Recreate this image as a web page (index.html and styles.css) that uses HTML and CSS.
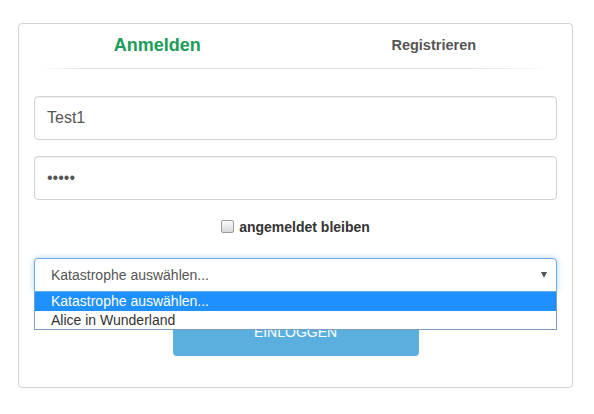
FILE: index.html
```html
<!DOCTYPE html>
<html lang="de">
<head>
<meta charset="utf-8">
<title>Anmelden</title>
<link rel="stylesheet" href="styles.css">
</head>
<body>
<div class="wrap">
  <div class="card">
    <div class="tabs">
      <div class="tab active">Anmelden</div>
      <div class="tab">Registrieren</div>
    </div>
    <div class="divider"></div>
    <form class="form">
      <input class="field" type="text" value="Test1">
      <input class="field" type="password" value="12345">
      <label class="remember"><input type="checkbox" class="check"><span>angemeldet bleiben</span></label>
      <div class="select-wrap">
        <div class="select">
          <span>Katastrophe auswählen...</span>
          <span class="arrow"></span>
        </div>
        <div class="dropdown">
          <div class="option selected">Katastrophe auswählen...</div>
          <div class="option">Alice in Wunderland</div>
        </div>
      </div>
      <button type="button" class="btn">EINLOGGEN</button>
    </form>
  </div>
</div>
</body>
</html>
```
FILE: styles.css
```css
html, body {
  margin: 0;
  padding: 0;
  background: #fff;
}
body {
  font-family: "Liberation Sans", Arial, sans-serif;
  color: #333;
}
.wrap {
  padding: 23px 22px 0 18px;
}
.card {
  box-sizing: border-box;
  width: 555px;
  height: 365px;
  border: 1px solid #d3d3d3;
  border-radius: 4px;
}
.tabs {
  display: grid;
  grid-template-columns: 1fr 1fr;
  height: 44px;
}
.tab {
  display: flex;
  align-items: center;
  justify-content: center;
  font-weight: bold;
  font-size: 14.5px;
  color: #555;
  padding-bottom: 2px;
}
.tab.active {
  font-size: 18px;
  color: #1b9c58;
  padding-bottom: 1px;
}
.divider {
  height: 1px;
  margin: 0 22px;
  background: linear-gradient(to right, rgba(221,221,221,0), #e3e3e3 8%, #e3e3e3 85%, rgba(221,221,221,0));
}
.form {
  display: flex;
  flex-direction: column;
  padding: 27px 15px 0;
}
.field {
  box-sizing: border-box;
  height: 44px;
  margin: 0 0 16px;
  padding: 0 12px;
  border: 1px solid #d2d2d2;
  border-radius: 4px;
  box-shadow: inset 0 1px 1px rgba(0,0,0,0.05);
  font-family: "Liberation Sans", Arial, sans-serif;
  font-size: 16px;
  color: #555;
  outline: none;
}
.field:last-of-type {
  margin-bottom: 0;
}
.remember {
  display: flex;
  align-items: center;
  justify-content: center;
  height: 30px;
  margin: 12px 0 16px;
  font-weight: bold;
  font-size: 14px;
  color: #333;
}
.check {
  appearance: none;
  -webkit-appearance: none;
  box-sizing: border-box;
  width: 13px;
  height: 13px;
  margin: -2px 5px 0 0;
  border: 1px solid #9a9a9a;
  border-radius: 2px;
  background: linear-gradient(#fafafa, #dadada);
}
.select-wrap {
  position: relative;
}
.select {
  box-sizing: border-box;
  display: flex;
  align-items: center;
  justify-content: space-between;
  height: 34px;
  padding: 0 9px 0 16px;
  border: 1px solid #6ea9e0;
  border-radius: 4px 4px 0 0;
  box-shadow: 0 0 6px rgba(102,175,233,0.5);
  font-size: 14px;
  color: #555;
  background: #fff;
}
.arrow {
  width: 0;
  height: 0;
  border-left: 3.5px solid transparent;
  border-right: 3.5px solid transparent;
  border-top: 6px solid #555;
}
.dropdown {
  position: absolute;
  z-index: 2;
  top: 100%;
  left: 0;
  right: 0;
  border: 1px solid #7c9cc2;
  border-top: 0;
  background: #fff;
}
.option {
  height: 18px;
  line-height: 18px;
  padding-left: 16px;
  font-size: 14px;
  color: #333;
}
.option.selected {
  height: 19px;
  background: #1e90ff;
  color: #fff;
}
.btn {
  align-self: center;
  width: 246px;
  height: 48px;
  margin-top: 16px;
  border: 0;
  border-radius: 4px;
  background: #5bafdf;
  color: #fff;
  font-family: "Liberation Sans", Arial, sans-serif;
  font-size: 14px;
}
```
